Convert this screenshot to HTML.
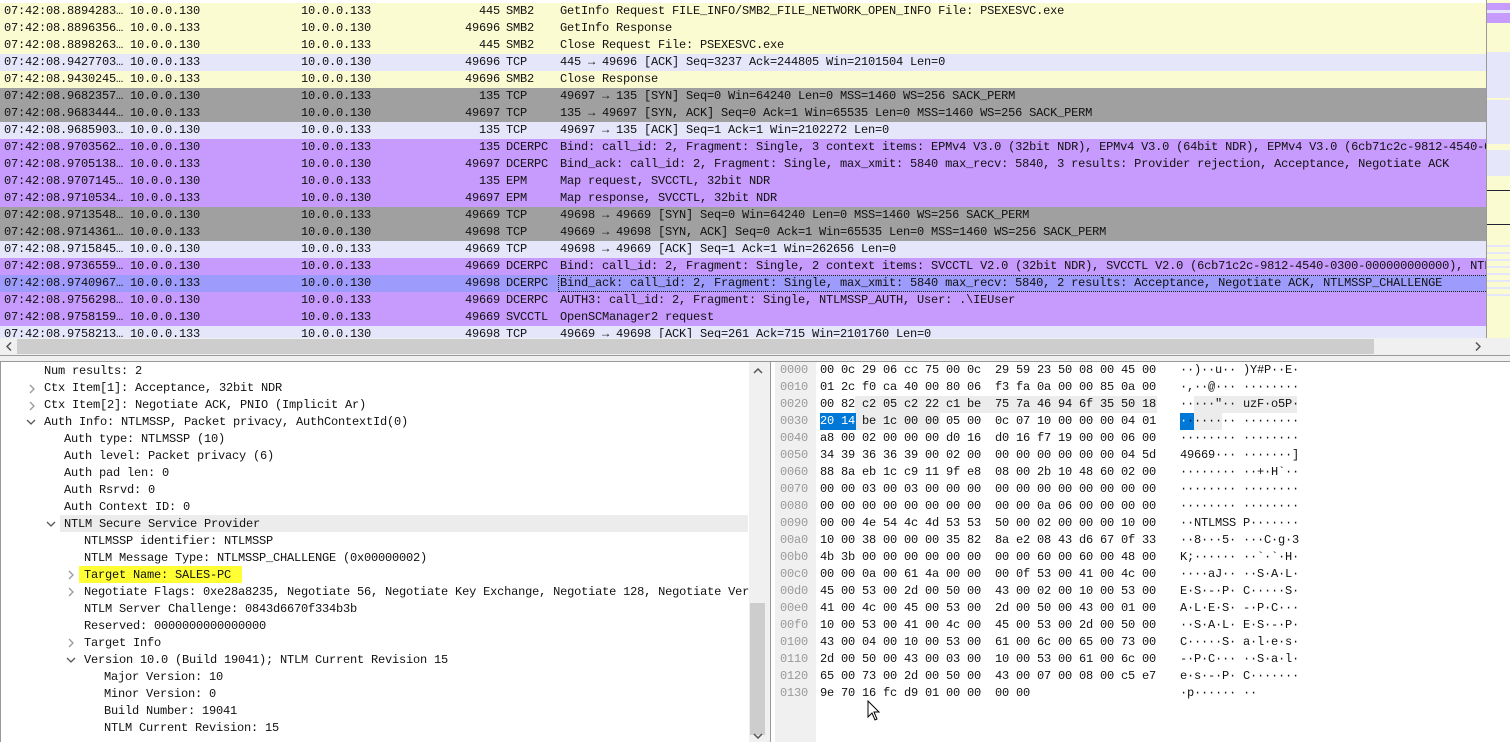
<!DOCTYPE html>
<html><head><meta charset="utf-8"><style>
*{margin:0;padding:0;box-sizing:border-box}
body{width:1510px;height:742px;overflow:hidden;background:#fff;font-family:"Liberation Mono",monospace;font-size:12px;letter-spacing:-0.2px;color:#111;position:relative}
.r{position:absolute;left:0;width:1486px;height:17px;line-height:17px;white-space:pre;overflow:hidden}
.r span{position:absolute;top:0}
.y{background:#fbfbd2}.l{background:#e6e6fb}.g{background:#a0a0a0}.p{background:#c79bfd}.s{background:#9d9cfc}
.c1{left:4px}.c2{left:130px}.c3{left:301px}.c4{right:986px;text-align:right}.c5{left:506px}.c6{left:560px}
.d{position:absolute;height:17px;line-height:17px;white-space:pre}
.h{position:absolute;height:17px;line-height:17px;white-space:pre}
svg.a{position:absolute}
</style></head><body>
<div class="r y" style="top:3px"><span class="c1">07:42:08.8894283…</span><span class="c2">10.0.0.130</span><span class="c3">10.0.0.133</span><span class="c4">445</span><span class="c5">SMB2</span><span class="c6">GetInfo Request FILE_INFO/SMB2_FILE_NETWORK_OPEN_INFO File: PSEXESVC.exe</span></div>
<div class="r y" style="top:20px"><span class="c1">07:42:08.8896356…</span><span class="c2">10.0.0.133</span><span class="c3">10.0.0.130</span><span class="c4">49696</span><span class="c5">SMB2</span><span class="c6">GetInfo Response</span></div>
<div class="r y" style="top:37px"><span class="c1">07:42:08.8898263…</span><span class="c2">10.0.0.130</span><span class="c3">10.0.0.133</span><span class="c4">445</span><span class="c5">SMB2</span><span class="c6">Close Request File: PSEXESVC.exe</span></div>
<div class="r l" style="top:54px"><span class="c1">07:42:08.9427703…</span><span class="c2">10.0.0.133</span><span class="c3">10.0.0.130</span><span class="c4">49696</span><span class="c5">TCP</span><span class="c6">445 → 49696 [ACK] Seq=3237 Ack=244805 Win=2101504 Len=0</span></div>
<div class="r y" style="top:71px"><span class="c1">07:42:08.9430245…</span><span class="c2">10.0.0.133</span><span class="c3">10.0.0.130</span><span class="c4">49696</span><span class="c5">SMB2</span><span class="c6">Close Response</span></div>
<div class="r g" style="top:88px"><span class="c1">07:42:08.9682357…</span><span class="c2">10.0.0.130</span><span class="c3">10.0.0.133</span><span class="c4">135</span><span class="c5">TCP</span><span class="c6">49697 → 135 [SYN] Seq=0 Win=64240 Len=0 MSS=1460 WS=256 SACK_PERM</span></div>
<div class="r g" style="top:105px"><span class="c1">07:42:08.9683444…</span><span class="c2">10.0.0.133</span><span class="c3">10.0.0.130</span><span class="c4">49697</span><span class="c5">TCP</span><span class="c6">135 → 49697 [SYN, ACK] Seq=0 Ack=1 Win=65535 Len=0 MSS=1460 WS=256 SACK_PERM</span></div>
<div class="r l" style="top:122px"><span class="c1">07:42:08.9685903…</span><span class="c2">10.0.0.130</span><span class="c3">10.0.0.133</span><span class="c4">135</span><span class="c5">TCP</span><span class="c6">49697 → 135 [ACK] Seq=1 Ack=1 Win=2102272 Len=0</span></div>
<div class="r p" style="top:139px"><span class="c1">07:42:08.9703562…</span><span class="c2">10.0.0.130</span><span class="c3">10.0.0.133</span><span class="c4">135</span><span class="c5">DCERPC</span><span class="c6">Bind: call_id: 2, Fragment: Single, 3 context items: EPMv4 V3.0 (32bit NDR), EPMv4 V3.0 (64bit NDR), EPMv4 V3.0 (6cb71c2c-9812-4540-0300-000000000000)</span></div>
<div class="r p" style="top:156px"><span class="c1">07:42:08.9705138…</span><span class="c2">10.0.0.133</span><span class="c3">10.0.0.130</span><span class="c4">49697</span><span class="c5">DCERPC</span><span class="c6">Bind_ack: call_id: 2, Fragment: Single, max_xmit: 5840 max_recv: 5840, 3 results: Provider rejection, Acceptance, Negotiate ACK</span></div>
<div class="r p" style="top:173px"><span class="c1">07:42:08.9707145…</span><span class="c2">10.0.0.130</span><span class="c3">10.0.0.133</span><span class="c4">135</span><span class="c5">EPM</span><span class="c6">Map request, SVCCTL, 32bit NDR</span></div>
<div class="r p" style="top:190px"><span class="c1">07:42:08.9710534…</span><span class="c2">10.0.0.133</span><span class="c3">10.0.0.130</span><span class="c4">49697</span><span class="c5">EPM</span><span class="c6">Map response, SVCCTL, 32bit NDR</span></div>
<div class="r g" style="top:207px"><span class="c1">07:42:08.9713548…</span><span class="c2">10.0.0.130</span><span class="c3">10.0.0.133</span><span class="c4">49669</span><span class="c5">TCP</span><span class="c6">49698 → 49669 [SYN] Seq=0 Win=64240 Len=0 MSS=1460 WS=256 SACK_PERM</span></div>
<div class="r g" style="top:224px"><span class="c1">07:42:08.9714361…</span><span class="c2">10.0.0.133</span><span class="c3">10.0.0.130</span><span class="c4">49698</span><span class="c5">TCP</span><span class="c6">49669 → 49698 [SYN, ACK] Seq=0 Ack=1 Win=65535 Len=0 MSS=1460 WS=256 SACK_PERM</span></div>
<div class="r l" style="top:241px"><span class="c1">07:42:08.9715845…</span><span class="c2">10.0.0.130</span><span class="c3">10.0.0.133</span><span class="c4">49669</span><span class="c5">TCP</span><span class="c6">49698 → 49669 [ACK] Seq=1 Ack=1 Win=262656 Len=0</span></div>
<div class="r p" style="top:258px"><span class="c1">07:42:08.9736559…</span><span class="c2">10.0.0.130</span><span class="c3">10.0.0.133</span><span class="c4">49669</span><span class="c5">DCERPC</span><span class="c6">Bind: call_id: 2, Fragment: Single, 2 context items: SVCCTL V2.0 (32bit NDR), SVCCTL V2.0 (6cb71c2c-9812-4540-0300-000000000000), NTLMSSP_NEGOTIATE</span></div>
<div class="r s" style="top:275px"><span class="c1">07:42:08.9740967…</span><span class="c2">10.0.0.133</span><span class="c3">10.0.0.130</span><span class="c4">49698</span><span class="c5">DCERPC</span><span class="c6">Bind_ack: call_id: 2, Fragment: Single, max_xmit: 5840 max_recv: 5840, 2 results: Acceptance, Negotiate ACK, NTLMSSP_CHALLENGE</span><span style="left:558px;top:0;width:928px;height:17px;border:1px dotted #222;border-right:none"></span></div>
<div class="r p" style="top:292px"><span class="c1">07:42:08.9756298…</span><span class="c2">10.0.0.130</span><span class="c3">10.0.0.133</span><span class="c4">49669</span><span class="c5">DCERPC</span><span class="c6">AUTH3: call_id: 2, Fragment: Single, NTLMSSP_AUTH, User: .\IEUser</span></div>
<div class="r p" style="top:309px"><span class="c1">07:42:08.9758159…</span><span class="c2">10.0.0.130</span><span class="c3">10.0.0.133</span><span class="c4">49669</span><span class="c5">SVCCTL</span><span class="c6">OpenSCManager2 request</span></div>
<div class="r l" style="top:326px"><span class="c1">07:42:08.9758213…</span><span class="c2">10.0.0.133</span><span class="c3">10.0.0.130</span><span class="c4">49698</span><span class="c5">TCP</span><span class="c6">49669 → 49698 [ACK] Seq=261 Ack=715 Win=2101760 Len=0</span></div>

<!-- minimap -->
<div style="position:absolute;left:1486px;top:0;width:1px;height:338px;background:#999"></div>
<div style="position:absolute;left:1487px;top:0;width:23px;height:338px;background:#fbfbd2"></div>
<div style="position:absolute;left:1487px;top:3px;width:23px;height:20px;background:#c79bfd"></div>
<div style="position:absolute;left:1487px;top:10px;width:23px;height:3px;background:#e6e6fb"></div>
<div style="position:absolute;left:1487px;top:52px;width:23px;height:46px;background:#e6e6fb"></div>
<div style="position:absolute;left:1487px;top:100px;width:23px;height:44px;background:#e6e6fb"></div>
<div style="position:absolute;left:1487px;top:150px;width:23px;height:26px;background:#e6e6fb"></div>
<div style="position:absolute;left:1487px;top:190px;width:23px;height:1px;background:#223"></div>
<div style="position:absolute;left:1487px;top:224px;width:23px;height:1px;background:#223"></div>
<div style="position:absolute;left:1487px;top:240px;width:23px;height:60px;background:repeating-linear-gradient(#fbfbd2 0 5px,#e6e6fb 5px 7px)"></div>
<!-- hscroll -->
<div style="position:absolute;left:0;top:338px;width:1510px;height:17px;background:#f0f0f0"></div>
<div style="position:absolute;left:17px;top:339px;width:1357px;height:15px;background:#cdcdcd"></div>
<svg class="a" style="left:6px;top:342px" width="6" height="9"><path d="M5 0.5 L1 4.5 L5 8.5" fill="none" stroke="#555" stroke-width="1.5"/></svg>
<svg class="a" style="left:1475px;top:342px" width="6" height="9"><path d="M1 0.5 L5 4.5 L1 8.5" fill="none" stroke="#555" stroke-width="1.5"/></svg>
<div style="position:absolute;left:0;top:355px;width:1510px;height:1px;background:#999"></div>
<div style="position:absolute;left:0;top:356px;width:1510px;height:6px;background:#f0f0f0"></div>
<div style="position:absolute;left:0;top:361px;width:1510px;height:1px;background:#999"></div>

<!-- details pane -->
<div style="position:absolute;left:0;top:362px;width:1px;height:380px;background:#999"></div>
<div style="position:absolute;left:60px;top:515px;width:688px;height:17px;background:#ececec"></div>
<div style="position:absolute;left:79px;top:566px;width:163px;height:17px;background:#ffff33"></div>
<div class="d" style="left:44px;top:363px">Num results: 2</div>
<svg class="a" style="left:29px;top:384px" width="6" height="10"><path d="M1 1 L5 5 L1 9" fill="none" stroke="#999" stroke-width="1.3"/></svg><div class="d" style="left:44px;top:380px">Ctx Item[1]: Acceptance, 32bit NDR</div>
<svg class="a" style="left:29px;top:401px" width="6" height="10"><path d="M1 1 L5 5 L1 9" fill="none" stroke="#999" stroke-width="1.3"/></svg><div class="d" style="left:44px;top:397px">Ctx Item[2]: Negotiate ACK, PNIO (Implicit Ar)</div>
<svg class="a" style="left:26px;top:419px" width="10" height="6"><path d="M1 1 L5 5 L9 1" fill="none" stroke="#555" stroke-width="1.3"/></svg><div class="d" style="left:44px;top:414px">Auth Info: NTLMSSP, Packet privacy, AuthContextId(0)</div>
<div class="d" style="left:64px;top:431px">Auth type: NTLMSSP (10)</div>
<div class="d" style="left:64px;top:448px">Auth level: Packet privacy (6)</div>
<div class="d" style="left:64px;top:465px">Auth pad len: 0</div>
<div class="d" style="left:64px;top:482px">Auth Rsrvd: 0</div>
<div class="d" style="left:64px;top:499px">Auth Context ID: 0</div>
<svg class="a" style="left:46px;top:521px" width="10" height="6"><path d="M1 1 L5 5 L9 1" fill="none" stroke="#555" stroke-width="1.3"/></svg><div class="d" style="left:64px;top:516px">NTLM Secure Service Provider</div>
<div class="d" style="left:84px;top:533px">NTLMSSP identifier: NTLMSSP</div>
<div class="d" style="left:84px;top:550px">NTLM Message Type: NTLMSSP_CHALLENGE (0x00000002)</div>
<svg class="a" style="left:68px;top:570px" width="6" height="10"><path d="M1 1 L5 5 L1 9" fill="none" stroke="#999" stroke-width="1.3"/></svg><div class="d" style="left:84px;top:567px">Target Name: SALES-PC</div>
<svg class="a" style="left:68px;top:587px" width="6" height="10"><path d="M1 1 L5 5 L1 9" fill="none" stroke="#999" stroke-width="1.3"/></svg><div class="d" style="left:84px;top:584px;width:665px;overflow:hidden">Negotiate Flags: 0xe28a8235, Negotiate 56, Negotiate Key Exchange, Negotiate 128, Negotiate Version</div>
<div class="d" style="left:84px;top:601px">NTLM Server Challenge: 0843d6670f334b3b</div>
<div class="d" style="left:84px;top:618px">Reserved: 0000000000000000</div>
<svg class="a" style="left:68px;top:638px" width="6" height="10"><path d="M1 1 L5 5 L1 9" fill="none" stroke="#999" stroke-width="1.3"/></svg><div class="d" style="left:84px;top:635px">Target Info</div>
<svg class="a" style="left:66px;top:657px" width="10" height="6"><path d="M1 1 L5 5 L9 1" fill="none" stroke="#555" stroke-width="1.3"/></svg><div class="d" style="left:84px;top:652px">Version 10.0 (Build 19041); NTLM Current Revision 15</div>
<div class="d" style="left:104px;top:669px">Major Version: 10</div>
<div class="d" style="left:104px;top:686px">Minor Version: 0</div>
<div class="d" style="left:104px;top:703px">Build Number: 19041</div>
<div class="d" style="left:104px;top:720px">NTLM Current Revision: 15</div>
<!-- vscroll -->
<div style="position:absolute;left:749px;top:362px;width:17px;height:380px;background:#f0f0f0"></div>
<div style="position:absolute;left:750px;top:603px;width:15px;height:132px;background:#cdcdcd"></div>
<svg class="a" style="left:753px;top:368px" width="10" height="6"><path d="M1 5 L5 1 L9 5" fill="none" stroke="#555" stroke-width="1.5"/></svg>
<svg class="a" style="left:753px;top:733px" width="10" height="6"><path d="M1 1 L5 5 L9 1" fill="none" stroke="#555" stroke-width="1.5"/></svg>
<div style="position:absolute;left:766px;top:362px;width:5px;height:380px;background:#f0f0f0"></div>
<div style="position:absolute;left:770px;top:362px;width:1px;height:380px;background:#999"></div>

<!-- hex pane -->
<div style="position:absolute;left:775px;top:362px;width:41px;height:380px;background:#f0f0f0"></div>
<div style="position:absolute;left:855px;top:396px;width:302px;height:17px;background:#ececec"></div>
<div style="position:absolute;left:855px;top:413px;width:85px;height:17px;background:#ececec"></div>
<div style="position:absolute;left:820px;top:413px;width:36px;height:17px;background:#0078d7"></div>
<div style="position:absolute;left:1194px;top:396px;width:103px;height:17px;background:#ececec"></div>
<div style="position:absolute;left:1180px;top:413px;width:14px;height:17px;background:#0078d7"></div>
<div style="position:absolute;left:1194px;top:413px;width:28px;height:17px;background:#ececec"></div>
<div class="h" style="left:780px;top:362px;color:#999">0000
0010
0020
0030
0040
0050
0060
0070
0080
0090
00a0
00b0
00c0
00d0
00e0
00f0
0100
0110
0120
0130</div>
<div class="h" style="left:820px;top:362px">00 0c 29 06 cc 75 00 0c  29 59 23 50 08 00 45 00
01 2c f0 ca 40 00 80 06  f3 fa 0a 00 00 85 0a 00
00 82 c2 05 c2 22 c1 be  75 7a 46 94 6f 35 50 18
<span style="color:#fff">20 14</span> be 1c 00 00 05 00  0c 07 10 00 00 00 04 01
a8 00 02 00 00 00 d0 16  d0 16 f7 19 00 00 06 00
34 39 36 36 39 00 02 00  00 00 00 00 00 00 04 5d
88 8a eb 1c c9 11 9f e8  08 00 2b 10 48 60 02 00
00 00 03 00 03 00 00 00  00 00 00 00 00 00 00 00
00 00 00 00 00 00 00 00  00 00 0a 06 00 00 00 00
00 00 4e 54 4c 4d 53 53  50 00 02 00 00 00 10 00
10 00 38 00 00 00 35 82  8a e2 08 43 d6 67 0f 33
4b 3b 00 00 00 00 00 00  00 00 60 00 60 00 48 00
00 00 0a 00 61 4a 00 00  00 0f 53 00 41 00 4c 00
45 00 53 00 2d 00 50 00  43 00 02 00 10 00 53 00
41 00 4c 00 45 00 53 00  2d 00 50 00 43 00 01 00
10 00 53 00 41 00 4c 00  45 00 53 00 2d 00 50 00
43 00 04 00 10 00 53 00  61 00 6c 00 65 00 73 00
2d 00 50 00 43 00 03 00  10 00 53 00 61 00 6c 00
65 00 73 00 2d 00 50 00  43 00 07 00 08 00 c5 e7
9e 70 16 fc d9 01 00 00  00 00</div>
<div class="h" style="left:1180px;top:362px">··)··u·· )Y#P··E·
·,··@··· ········
·····"·· uzF·o5P·
<span style="color:#fff">·</span>······· ········
········ ········
49669··· ·······]
········ ··+·H`··
········ ········
········ ········
··NTLMSS P·······
··8···5· ···C·g·3
K;······ ··`·`·H·
····aJ·· ··S·A·L·
E·S·-·P· C·····S·
A·L·E·S· -·P·C···
··S·A·L· E·S·-·P·
C·····S· a·l·e·s·
-·P·C··· ··S·a·l·
e·s·-·P· C·······
·p······ ··</div>
<svg style="position:absolute;left:867px;top:700px" width="14" height="22" viewBox="0 0 14 22"><path d="M1 1 L1 17 L5 13 L8 20 L10 19 L7 12 L12 12 Z" fill="#fff" stroke="#000" stroke-width="1"/></svg>
</body></html>
